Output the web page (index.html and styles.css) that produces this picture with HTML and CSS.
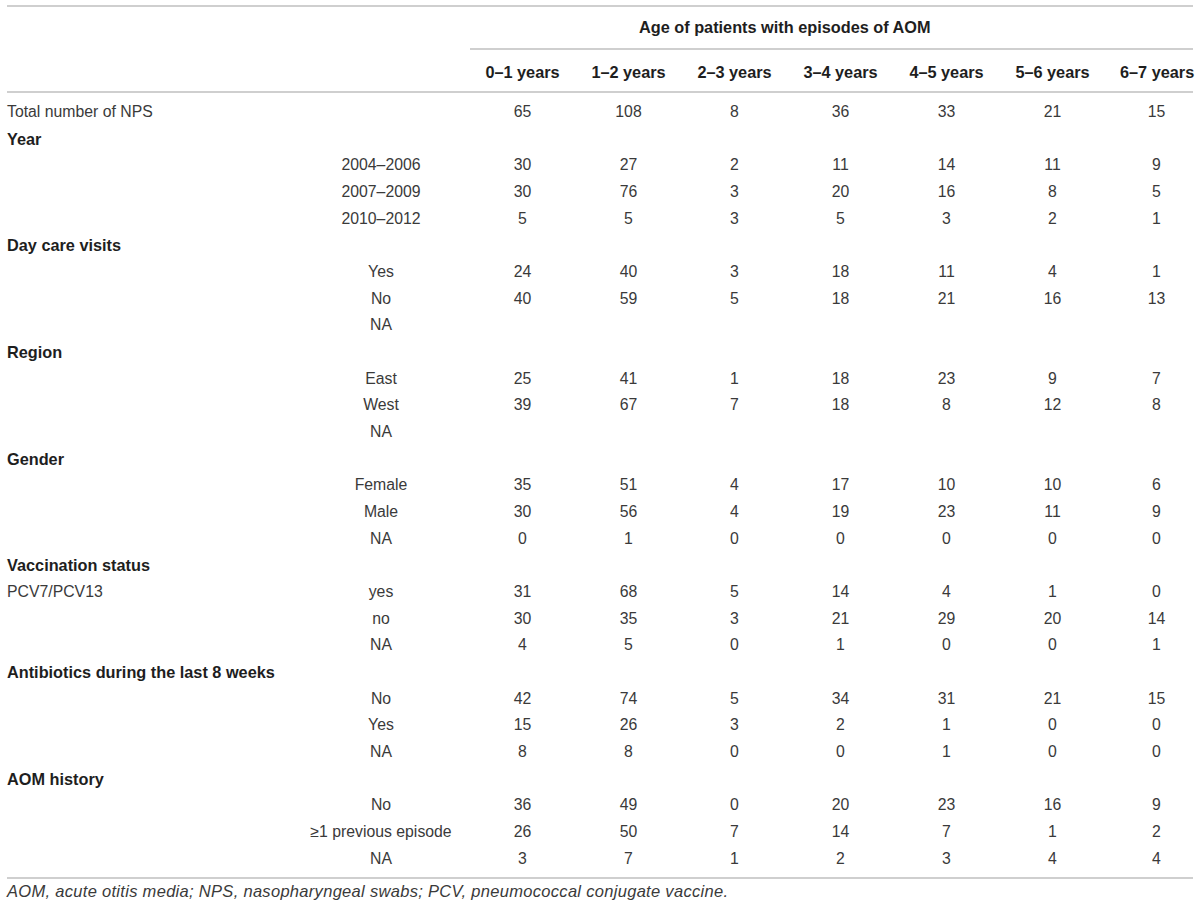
FILE: index.html
```html
<!DOCTYPE html>
<html lang="en">
<head>
<meta charset="utf-8">
<title>Age of patients with episodes of AOM</title>
<link rel="stylesheet" href="styles.css">
</head>
<body>
<div class="page">
<table class="data">
<colgroup>
<col class="c-label"><col class="c-sub">
<col class="c-num"><col class="c-num"><col class="c-num"><col class="c-num"><col class="c-num"><col class="c-num"><col class="c-last">
</colgroup>
<thead>
<tr class="hr1">
<th colspan="2" class="blank"></th>
<th colspan="7" class="span">Age of patients with episodes of AOM</th>
</tr>
<tr class="hr2">
<th class="blank"></th><th class="blank"></th>
<th>0–1 years</th><th>1–2 years</th><th>2–3 years</th><th>3–4 years</th><th>4–5 years</th><th>5–6 years</th><th class="last">6–7 years</th>
</tr>
</thead>
<tbody>
<tr class="first"><td class="lbl">Total number of NPS</td><td class="sub"></td><td>65</td><td>108</td><td>8</td><td>36</td><td>33</td><td>21</td><td class="last">15</td></tr>
<tr><td colspan="9" class="grp">Year</td></tr>
<tr><td class="lbl"></td><td class="sub">2004–2006</td><td>30</td><td>27</td><td>2</td><td>11</td><td>14</td><td>11</td><td class="last">9</td></tr>
<tr><td class="lbl"></td><td class="sub">2007–2009</td><td>30</td><td>76</td><td>3</td><td>20</td><td>16</td><td>8</td><td class="last">5</td></tr>
<tr><td class="lbl"></td><td class="sub">2010–2012</td><td>5</td><td>5</td><td>3</td><td>5</td><td>3</td><td>2</td><td class="last">1</td></tr>
<tr><td colspan="9" class="grp">Day care visits</td></tr>
<tr><td class="lbl"></td><td class="sub">Yes</td><td>24</td><td>40</td><td>3</td><td>18</td><td>11</td><td>4</td><td class="last">1</td></tr>
<tr><td class="lbl"></td><td class="sub">No</td><td>40</td><td>59</td><td>5</td><td>18</td><td>21</td><td>16</td><td class="last">13</td></tr>
<tr><td class="lbl"></td><td class="sub">NA</td><td></td><td></td><td></td><td></td><td></td><td></td><td class="last"></td></tr>
<tr><td colspan="9" class="grp">Region</td></tr>
<tr><td class="lbl"></td><td class="sub">East</td><td>25</td><td>41</td><td>1</td><td>18</td><td>23</td><td>9</td><td class="last">7</td></tr>
<tr><td class="lbl"></td><td class="sub">West</td><td>39</td><td>67</td><td>7</td><td>18</td><td>8</td><td>12</td><td class="last">8</td></tr>
<tr><td class="lbl"></td><td class="sub">NA</td><td></td><td></td><td></td><td></td><td></td><td></td><td class="last"></td></tr>
<tr><td colspan="9" class="grp">Gender</td></tr>
<tr><td class="lbl"></td><td class="sub">Female</td><td>35</td><td>51</td><td>4</td><td>17</td><td>10</td><td>10</td><td class="last">6</td></tr>
<tr><td class="lbl"></td><td class="sub">Male</td><td>30</td><td>56</td><td>4</td><td>19</td><td>23</td><td>11</td><td class="last">9</td></tr>
<tr><td class="lbl"></td><td class="sub">NA</td><td>0</td><td>1</td><td>0</td><td>0</td><td>0</td><td>0</td><td class="last">0</td></tr>
<tr><td colspan="9" class="grp">Vaccination status</td></tr>
<tr><td class="lbl">PCV7/PCV13</td><td class="sub">yes</td><td>31</td><td>68</td><td>5</td><td>14</td><td>4</td><td>1</td><td class="last">0</td></tr>
<tr><td class="lbl"></td><td class="sub">no</td><td>30</td><td>35</td><td>3</td><td>21</td><td>29</td><td>20</td><td class="last">14</td></tr>
<tr><td class="lbl"></td><td class="sub">NA</td><td>4</td><td>5</td><td>0</td><td>1</td><td>0</td><td>0</td><td class="last">1</td></tr>
<tr><td colspan="9" class="grp">Antibiotics during the last 8 weeks</td></tr>
<tr><td class="lbl"></td><td class="sub">No</td><td>42</td><td>74</td><td>5</td><td>34</td><td>31</td><td>21</td><td class="last">15</td></tr>
<tr><td class="lbl"></td><td class="sub">Yes</td><td>15</td><td>26</td><td>3</td><td>2</td><td>1</td><td>0</td><td class="last">0</td></tr>
<tr><td class="lbl"></td><td class="sub">NA</td><td>8</td><td>8</td><td>0</td><td>0</td><td>1</td><td>0</td><td class="last">0</td></tr>
<tr><td colspan="9" class="grp">AOM history</td></tr>
<tr><td class="lbl"></td><td class="sub">No</td><td>36</td><td>49</td><td>0</td><td>20</td><td>23</td><td>16</td><td class="last">9</td></tr>
<tr><td class="lbl"></td><td class="sub">≥1 previous episode</td><td>26</td><td>50</td><td>7</td><td>14</td><td>7</td><td>1</td><td class="last">2</td></tr>
<tr class="final"><td class="lbl"></td><td class="sub">NA</td><td>3</td><td>7</td><td>1</td><td>2</td><td>3</td><td>4</td><td class="last">4</td></tr>
</tbody>
</table>
<p class="note">AOM, acute otitis media; NPS, nasopharyngeal swabs; PCV, pneumococcal conjugate vaccine.</p>
</div>
</body>
</html>
```
FILE: styles.css
```css
html, body {
  margin: 0;
  padding: 0;
  background: #ffffff;
}

.page {
  padding: 5px 0 0 7px;
  font-family: "Liberation Sans", Arial, Helvetica, sans-serif;
  color: #3a3a3a;
}

.data {
  border-collapse: separate;
  border-spacing: 0;
  table-layout: fixed;
  width: 1186px;
}

.c-label { width: 285px; }
.c-sub { width: 178px; }
.c-num { width: 106px; }
.c-last { width: 87px; }

.data th {
  font-weight: bold;
  font-size: 16.3px;
  color: #1e1e1e;
  padding: 0;
  white-space: nowrap;
}

.hr1 th {
  border-top: 2px solid #cfcfcf;
  height: 41px;
  line-height: 41px;
}

.hr1 th.span {
  text-align: left;
  padding-left: 169px;
  border-bottom: 2px solid #cfcfcf;
}

.hr2 th {
  padding-top: 3px;
  line-height: 38px;
  text-align: center;
  padding-right: 1px;
  border-bottom: 2px solid #cfcfcf;
}

.hr2 th.last {
  padding-left: 14px;
  padding-right: 0;
}

.data td {
  padding: 0 1px 0 0;
  font-size: 15.8px;
  line-height: 26.67px;
  height: 26.67px;
  text-align: center;
  white-space: nowrap;
  vertical-align: middle;
}

.data td.last {
  padding: 0 0 0 14px;
}

.data td.lbl {
  text-align: left;
  padding: 0;
}

.data td.sub {
  text-align: center;
  padding: 0;
}

.data td.grp {
  text-align: left;
  font-weight: bold;
  font-size: 16.3px;
  color: #1e1e1e;
  padding: 0;
}

.data tr.first td {
  padding-top: 6px;
}

.data tr.final td {
  padding-bottom: 5px;
  border-bottom: 2px solid #cfcfcf;
}

.note {
  margin: 0;
  font-size: 16.5px;
  letter-spacing: 0.3px;
  line-height: 25px;
  font-style: italic;
  color: #3a3a3a;
}
```
